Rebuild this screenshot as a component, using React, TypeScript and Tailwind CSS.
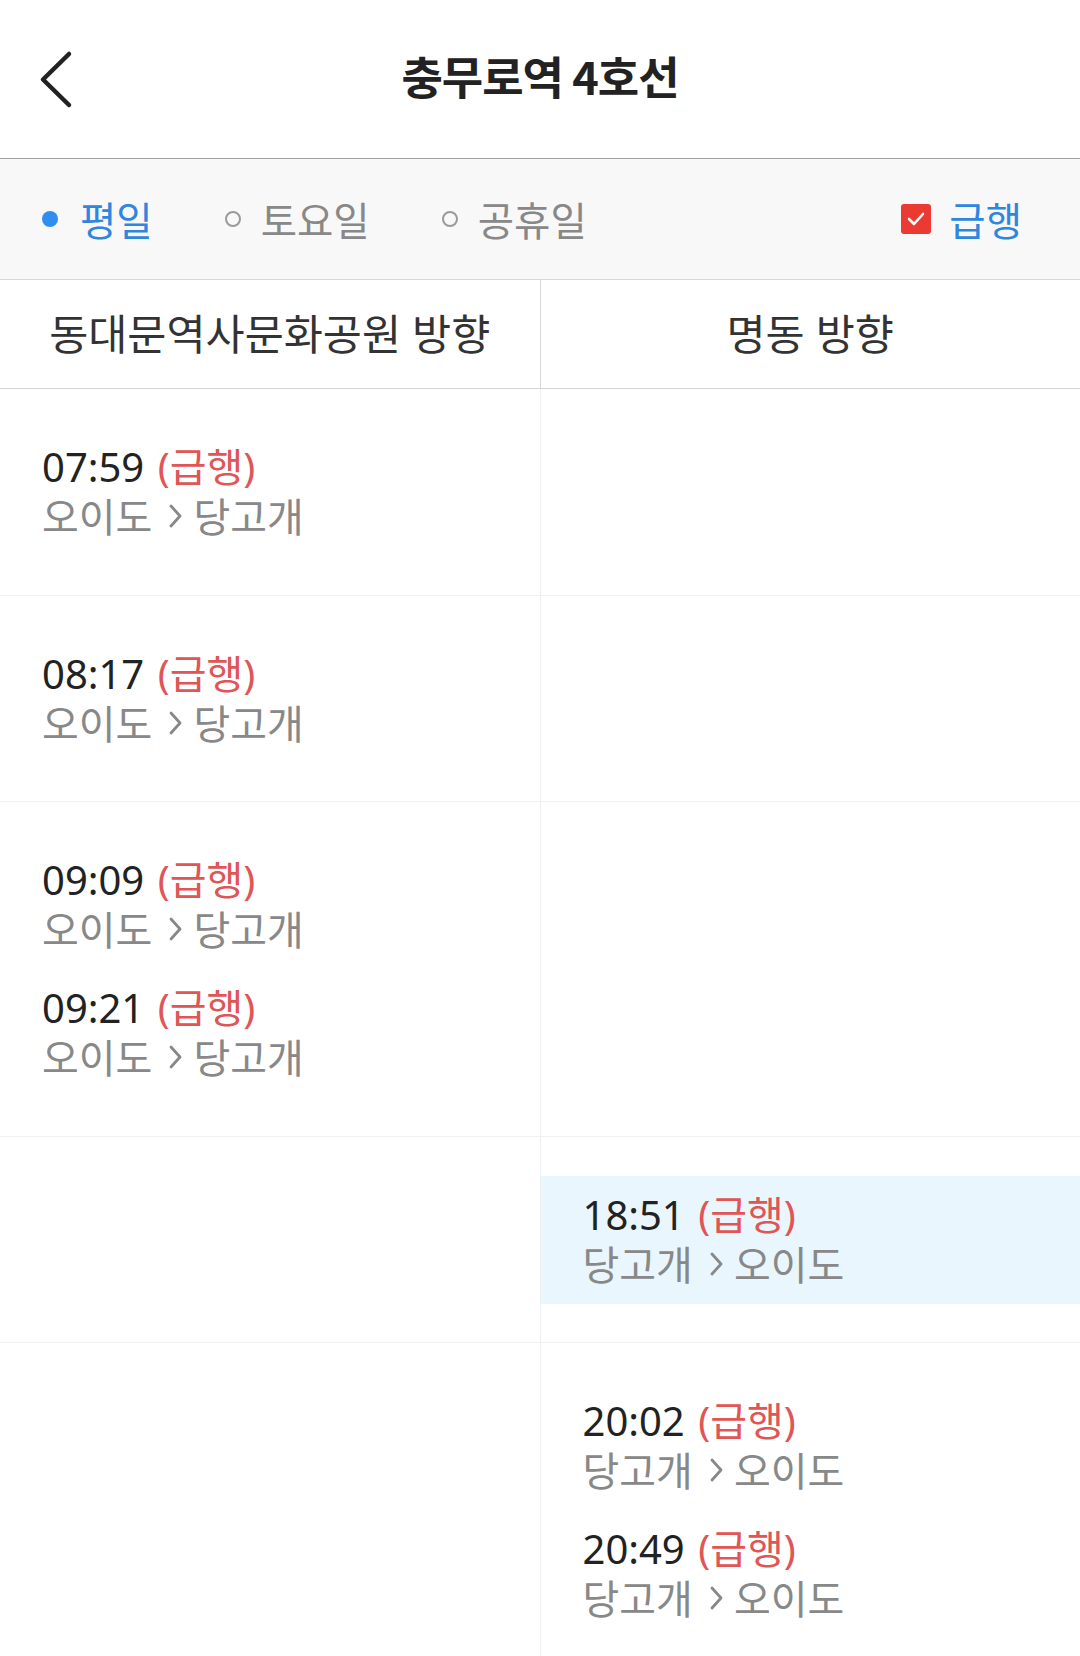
import React from "react";

type Entry = { time: string; from: string; to: string; highlight?: boolean };
type Row = { left: Entry[]; right: Entry[] };

const rows: Row[] = [
  { left: [{ time: "07:59", from: "오이도", to: "당고개" }], right: [] },
  { left: [{ time: "08:17", from: "오이도", to: "당고개" }], right: [] },
  {
    left: [
      { time: "09:09", from: "오이도", to: "당고개" },
      { time: "09:21", from: "오이도", to: "당고개" },
    ],
    right: [],
  },
  { left: [], right: [{ time: "18:51", from: "당고개", to: "오이도", highlight: true }] },
  {
    left: [],
    right: [
      { time: "20:02", from: "당고개", to: "오이도" },
      { time: "20:49", from: "당고개", to: "오이도" },
    ],
  },
];

const cjk = { fontFamily: '"Noto Sans CJK KR", sans-serif' };

function Chevron() {
  return (
    <svg
      className="ml-[17px] mr-[11px] mt-[-2px]"
      width="13"
      height="24"
      viewBox="0 0 13 24"
      fill="none"
    >
      <path
        d="M2 2 L11 12 L2 22"
        stroke="#888888"
        strokeWidth="2.8"
        strokeLinecap="round"
        strokeLinejoin="round"
      />
    </svg>
  );
}

function EntryView({ e }: { e: Entry }) {
  return (
    <div
      className={
        "h-[128px] flex flex-col justify-center pl-[42px] " +
        (e.highlight ? "bg-[#eaf6fd]" : "")
      }
    >
      <div className="text-[40px] leading-[50px] text-[#222222] whitespace-nowrap">
        {e.time} <span className="text-[#e05555] ml-[3px]">(급행)</span>
      </div>
      <div className="h-[50px] text-[40px] leading-[50px] text-[#888888] whitespace-nowrap flex items-center">
        <span>{e.from}</span>
        <Chevron />
        <span>{e.to}</span>
      </div>
    </div>
  );
}

function Cell({ entries, right }: { entries: Entry[]; right?: boolean }) {
  return (
    <div
      className={
        "flex-1 pt-[39px] pb-[38.5px] min-h-[205.5px] " +
        (right ? "border-l border-[#eeeeee]" : "")
      }
    >
      {entries.map((e, i) => (
        <EntryView key={i} e={e} />
      ))}
    </div>
  );
}

export default function App() {
  return (
    <div
      className="w-[1080px] h-[1656px] overflow-hidden bg-white"
      style={{ fontFamily: '"Noto Sans", "Noto Sans CJK KR", sans-serif' }}
    >
      {/* Header */}
      <div className="relative h-[159px] flex items-center justify-center border-b border-[#9e9e9e] pb-[6px]">
        <svg
          className="absolute left-[38px] top-[50px]"
          width="36"
          height="60"
          viewBox="0 0 36 60"
          fill="none"
        >
          <path
            d="M31 4 L5 29.5 L31 55"
            stroke="#222222"
            strokeWidth="4.5"
            strokeLinecap="round"
            strokeLinejoin="round"
          />
        </svg>
        <div className="text-[45px] font-bold text-[#222222] tracking-[-1px]" style={cjk}>
          충무로역 4호선
        </div>
      </div>

      {/* Filter bar */}
      <div className="h-[121px] bg-[#f8f8f8] border-b border-[#d8d8d8] flex items-center pl-[42px] pr-[58px]">
        <div className="flex items-center gap-[72px]">
          <div className="flex items-center gap-[22px]">
            <span className="w-[16px] h-[16px] rounded-full bg-[#2f8ef0]" />
            <span className="text-[39.5px] text-[#2f86de] leading-none" style={cjk}>
              평일
            </span>
          </div>
          <div className="flex items-center gap-[20px]">
            <span className="w-[16px] h-[16px] rounded-full border-[2.5px] border-[#9a9a9a]" />
            <span className="text-[39.5px] text-[#888888] leading-none" style={cjk}>
              토요일
            </span>
          </div>
          <div className="flex items-center gap-[20px]">
            <span className="w-[16px] h-[16px] rounded-full border-[2.5px] border-[#9a9a9a]" />
            <span className="text-[39.5px] text-[#888888] leading-none" style={cjk}>
              공휴일
            </span>
          </div>
        </div>
        <div className="ml-auto flex items-center gap-[18px]">
          <span className="w-[30px] h-[30px] rounded-[3px] bg-[#ea3a32] flex items-center justify-center">
            <svg width="20" height="16" viewBox="0 0 20 16" fill="none">
              <path
                d="M3 8 L8 13 L17 3"
                stroke="white"
                strokeWidth="2.6"
                strokeLinecap="round"
                strokeLinejoin="round"
              />
            </svg>
          </span>
          <span className="text-[39.5px] text-[#2f86de] leading-none" style={cjk}>
            급행
          </span>
        </div>
      </div>

      {/* Column header */}
      <div className="h-[109px] flex border-b border-[#d4d4d4]">
        <div className="flex-1 flex items-center justify-center text-[42.5px] text-[#333333] whitespace-nowrap">
          동대문역사문화공원 방향
        </div>
        <div className="flex-1 flex items-center justify-center text-[42.5px] text-[#333333] border-l border-[#d8d8d8]">
          명동 방향
        </div>
      </div>

      {/* Rows */}
      {rows.map((r, i) => (
        <div key={i} className="flex border-b border-[#f0f0f0]">
          <Cell entries={r.left} />
          <Cell entries={r.right} right />
        </div>
      ))}
    </div>
  );
}
